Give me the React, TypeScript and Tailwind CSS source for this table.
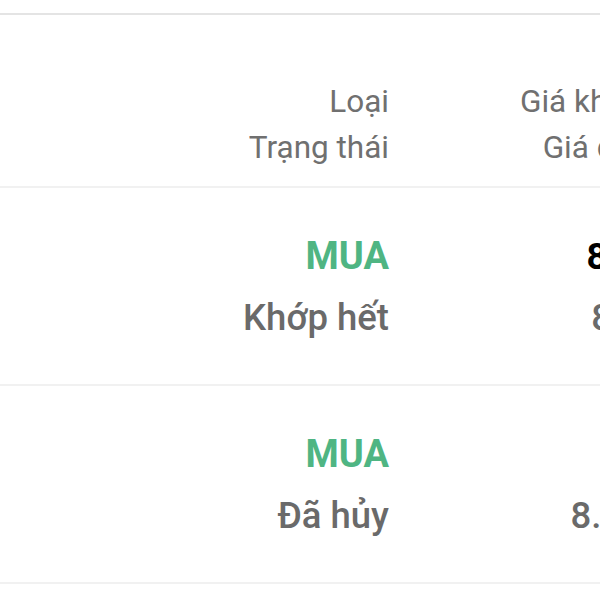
const rows = [
  { side: "MUA", status: "Khớp hết", matched: "8.4", ordered: "8.4" },
  { side: "MUA", status: "Đã hủy", matched: "", ordered: "8.45" },
];

export default function App() {
  return (
    <div className="w-[600px] h-[600px] overflow-hidden bg-white font-['Roboto',sans-serif]">
      <div className="h-[13px]" />
      <div className="h-[2px] bg-[#e4e4e4]" />

      {/* Column headings */}
      <div className="flex h-[173px] pt-[64px] border-b-2 border-[#f1f1f1] text-[31.5px] leading-[46px] text-[#707070]">
        <div className="w-[389px] shrink-0 text-right">
          <div>Loại</div>
          <div>Trạng thái</div>
        </div>
        <div className="w-[254px] shrink-0 text-right">
          <div>Giá khớp</div>
          <div>Giá đặt</div>
        </div>
      </div>

      {/* Orders */}
      {rows.map((row, i) => (
        <div
          key={i}
          className="flex h-[198px] pt-[38px] border-b-2 border-[#f1f1f1] text-[36.5px] leading-[61px] font-medium"
        >
          <div className="w-[389px] shrink-0 text-right">
            <div className="text-[38px] text-[#4fb583] font-bold">{row.side}</div>
            <div className="text-[#6a6a6a]">{row.status}</div>
          </div>
          <div className="w-[254px] shrink-0 text-right">
            <div className="h-[61px] pr-[4px] text-black font-bold">{row.matched}</div>
            <div className="text-[#6a6a6a]">{row.ordered}</div>
          </div>
        </div>
      ))}
    </div>
  );
}
